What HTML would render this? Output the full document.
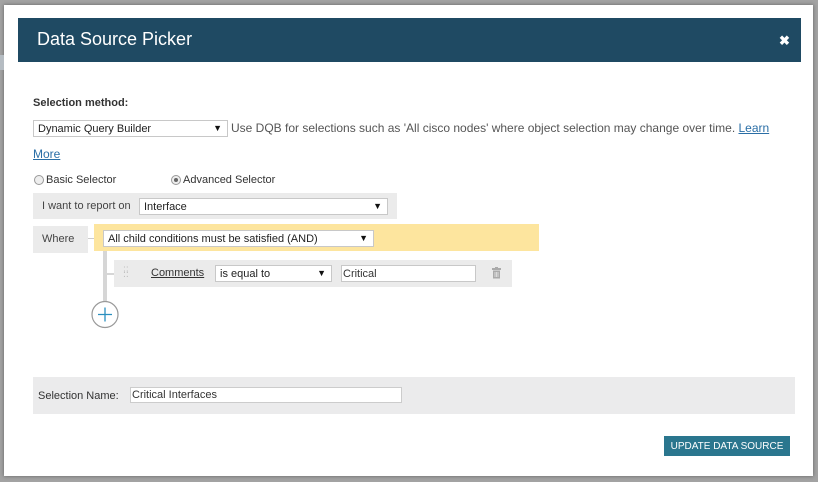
<!DOCTYPE html>
<html><head><meta charset="utf-8"><style>
*{box-sizing:border-box;margin:0;padding:0}
body{width:818px;height:482px;overflow:hidden;background:#a3a3a3;font-family:"Liberation Sans",sans-serif;font-size:11px;color:#333;position:relative}
.a{position:absolute}
.dlg{left:4px;top:5px;width:809px;height:471px;background:#fff;box-shadow:0 0 4px rgba(0,0,0,.4)}
.hdr{left:18px;top:18px;width:783px;height:44px;background:#1f4a63;color:#fff;font-size:18px;padding:11px 0 0 19px}
.sel{background:#fff;border:1px solid #c8c8c8;height:17px;padding:2px 0 0 4px;font-size:11px;color:#222}
.sel:after{content:"▼";position:absolute;right:5px;top:2px;font-size:9px;color:#111}
a{color:#2a6ea6;text-decoration:underline}
.rad{width:10px;height:10px;border:1px solid #999;border-radius:50%;background:#eee}
</style></head><body>
<div class="a dlg"></div>
<div class="a" style="left:0;top:55px;width:4px;height:15px;background:#b5bcc2"></div>
<div class="a hdr">Data Source Picker</div>
<div class="a" style="left:779px;top:33px;color:#fff;font-size:13px;font-weight:bold">✖</div>
<div class="a" style="left:33px;top:97px;font-weight:bold;font-size:11px">Selection method:</div>
<div class="a sel" style="left:33px;top:120px;width:195px">Dynamic Query Builder</div>
<div class="a" style="left:231px;top:121px;font-size:12px;color:#555">Use DQB for selections such as 'All cisco nodes' where object selection may change over time. <a>Learn</a></div>
<div class="a" style="left:33px;top:147px;font-size:12px"><a>More</a></div>
<div class="a rad" style="left:34px;top:175px"></div>
<div class="a" style="left:46px;top:174px">Basic Selector</div>
<div class="a rad" style="left:171px;top:175px"><div style="width:4px;height:4px;background:#666;border-radius:50%;margin:2px"></div></div>
<div class="a" style="left:183px;top:174px">Advanced Selector</div>
<div class="a" style="left:33px;top:193px;width:364px;height:26px;background:#ebebeb"></div>
<div class="a" style="left:42px;top:200px;color:#444">I want to report on</div>
<div class="a sel" style="left:139px;top:198px;width:249px">Interface</div>
<div class="a" style="left:33px;top:226px;width:55px;height:27px;background:#ebebeb"></div>
<div class="a" style="left:42px;top:233px;color:#444">Where</div>
<div class="a" style="left:88px;top:238px;width:6px;height:1px;background:#ccc"></div>
<div class="a" style="left:94px;top:224px;width:445px;height:27px;background:#fde59e"></div>
<div class="a sel" style="left:103px;top:230px;width:271px">All child conditions must be satisfied (AND)</div>
<div class="a" style="left:103px;top:251px;width:4px;height:55px;background:#d6d6d6"></div>
<div class="a" style="left:107px;top:273px;width:8px;height:2px;background:#d6d6d6"></div>
<div class="a" style="left:114px;top:260px;width:398px;height:27px;background:#ebebeb"></div>
<div class="a" style="left:123px;top:268px;color:#bbb;font-size:9px;line-height:4px">⁚⁚<br>⁚⁚</div>
<div class="a" style="left:151px;top:267px;color:#333"><a style="color:#333">Comments</a></div>
<div class="a sel" style="left:215px;top:265px;width:117px">is equal to</div>
<div class="a" style="left:341px;top:265px;width:135px;height:17px;background:#fff;border:1px solid #c8c8c8;padding:2px 0 0 1px">Critical</div>
<svg class="a" style="left:491px;top:267px" width="11" height="12" viewBox="0 0 11 12"><rect x="1" y="1" width="9" height="2" fill="#aaa"/><rect x="4" y="0" width="3" height="1" fill="#aaa"/><rect x="2" y="3.5" width="7" height="8" fill="#aaa"/><path d="M4 5v5M5.5 5v5M7 5v5" stroke="#eee" stroke-width=".7"/></svg>
<svg class="a" style="left:90px;top:300px" width="30" height="30"><circle cx="15" cy="14.5" r="13" fill="#fff" stroke="#999" stroke-width="1.2"/><path d="M15 7.5v14M8 14.5h14" stroke="#2a8fbf" stroke-width="1.3"/></svg>
<div class="a" style="left:33px;top:377px;width:762px;height:37px;background:#ebebec"></div>
<div class="a" style="left:38px;top:390px;color:#333">Selection Name:</div>
<div class="a" style="left:130px;top:387px;width:272px;height:16px;background:#fff;border:1px solid #ccc;padding:1px 0 0 1px">Critical Interfaces</div>
<div class="a" style="left:664px;top:436px;width:126px;height:20px;background:#2a768e;color:#fff;font-size:10px;text-align:center;padding-top:5px">UPDATE DATA SOURCE</div>
</body></html>
